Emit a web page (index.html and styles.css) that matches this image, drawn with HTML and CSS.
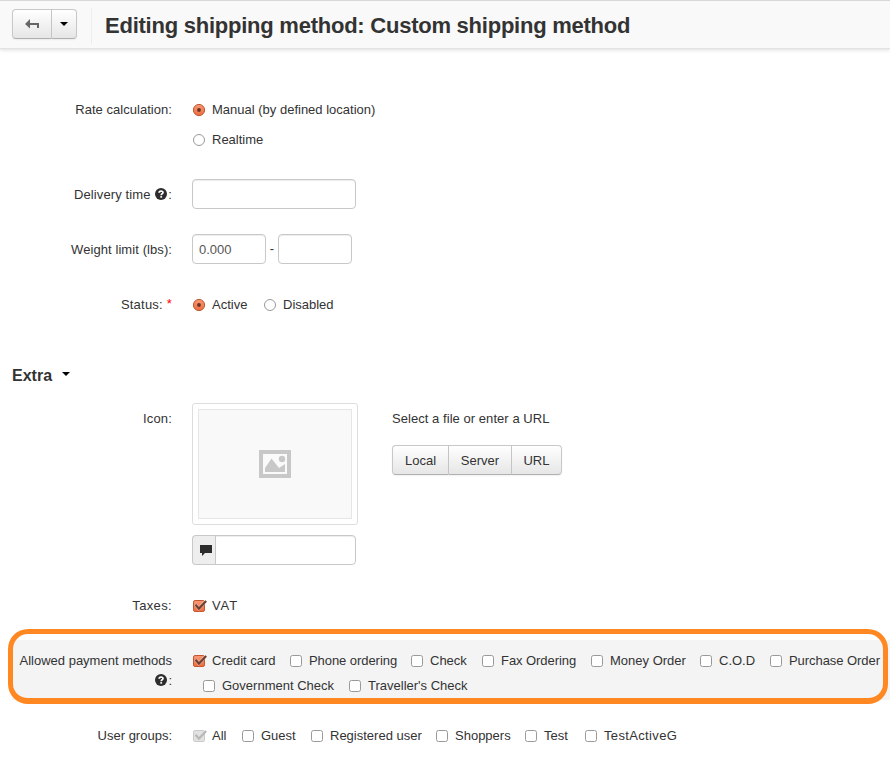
FILE: index.html
```html
<!DOCTYPE html>
<html lang="en">
<head>
<meta charset="utf-8">
<title>Editing shipping method: Custom shipping method</title>
<link rel="stylesheet" href="styles.css">
</head>
<body>
<svg class="defs" width="0" height="0" aria-hidden="true">
  <defs>
    <linearGradient id="warm" x1="0" y1="0" x2="0" y2="1"><stop offset="0" stop-color="#f79a78"/><stop offset="1" stop-color="#ec6c3f"/></linearGradient>
    <symbol id="radio-on" viewBox="0 0 14 13"><circle cx="6" cy="7" r="5.600" fill="url(#warm)" stroke="#c4552d"/><circle cx="6" cy="7" r="1.900" fill="#6b3322"/></symbol>
    <symbol id="radio-off" viewBox="0 0 14 13"><circle cx="6" cy="7" r="5.500" fill="#fff" stroke="#999997"/></symbol>
    <symbol id="check-on" viewBox="0 0 14 13"><rect x=".5" y="1.500" width="11" height="11" rx="1.600" fill="url(#warm)" stroke="#c4552d"/><path d="M2.500 5.500l3.300 4L13 2" fill="none" stroke="#fff" stroke-opacity=".3" stroke-width="3.600"/><path d="M2.600 5.700l3.300 3.900L13.200 2" fill="none" stroke="#6d4034" stroke-width="2.100"/></symbol>
    <symbol id="check-dim" viewBox="0 0 14 13"><rect x=".5" y="1.500" width="11" height="11" rx="1.600" fill="#e2e2e0" stroke="#cacac8"/><path d="M2.600 5.700l3.300 3.900L13.200 2" fill="none" stroke="#b8b8b6" stroke-width="2.100"/></symbol>
    <symbol id="check-off" viewBox="0 0 14 13"><rect x=".5" y="1.500" width="11" height="11" rx="2" fill="#fff" stroke="#999997"/></symbol>
    <symbol id="help" viewBox="0 0 12 12"><circle cx="6" cy="6" r="6" fill="#2d2d2d"/><path d="M4.100 4.700C4.100 2.500 8 2.500 8 4.600 8 5.900 6.200 5.700 6.200 7.200" fill="none" stroke="#fff" stroke-width="1.700"/><path d="M5.300 8.100h1.800v1.600H5.300z" fill="#fff"/></symbol>
  </defs>
</svg>
<header class="toolbar">
  <div class="buttons">
    <button class="btn back" aria-label="Back"><svg width="14" height="10" viewBox="0 0 14 10"><path d="M5 0v4h9v5h-2V6H5v3.500L0 5z" fill="#666"/></svg></button>
    <button class="btn more" aria-label="More"><i class="caret"></i></button>
  </div>
  <h1>Editing shipping method: Custom shipping method</h1>
</header>
<main>
  <div class="row rate">
    <div class="label">Rate calculation:</div>
    <div class="stack">
      <label class="opt"><svg class="mark"><use href="#radio-on"/></svg>Manual (by defined location)</label>
      <label class="opt"><svg class="mark"><use href="#radio-off"/></svg>Realtime</label>
    </div>
  </div>
  <div class="row field">
    <div class="label delivery">Delivery time <svg class="help"><use href="#help"/></svg>:</div>
    <input class="input wide" type="text" aria-label="Delivery time">
  </div>
  <div class="row field">
    <div class="label weight">Weight limit (lbs):</div>
    <input class="input narrow" type="text" value="0.000" aria-label="From"><span class="dash">-</span><input class="input narrow" type="text" aria-label="To">
  </div>
  <div class="row status">
    <div class="label">Status: <span class="required">*</span></div>
    <div class="options two">
      <label class="opt"><svg class="mark"><use href="#radio-on"/></svg>Active</label>
      <label class="opt"><svg class="mark"><use href="#radio-off"/></svg>Disabled</label>
    </div>
  </div>
  <h2>Extra <i class="caret"></i></h2>
  <div class="row icon-row">
    <div class="label">Icon:</div>
    <div class="upload">
      <div class="thumb"><div class="thumb-in"><svg width="32" height="28" viewBox="0 0 32 28"><path fill="#c8c8c8" d="M0 0h32v28H0z"/><path fill="#fafafa" d="M4 4h24v20H4z"/><path fill="#c8c8c8" d="M6 22v-4l6.500-9.500 7.500 9.500 6-4v8z"/><circle cx="23" cy="9" r="3.200" fill="#c8c8c8"/></svg></div></div>
      <div class="alt"><span class="addon"><svg width="12" height="11" viewBox="0 0 12 11"><path d="M0 0h12v8H5L2 11V8H0z" fill="#2d2d2d"/></svg></span><input class="input" type="text" aria-label="Alternative text"></div>
    </div>
    <div class="source">
      <div class="hint">Select a file or enter a URL</div>
      <div class="buttons"><button class="btn local">Local</button><button class="btn server">Server</button><button class="btn url">URL</button></div>
    </div>
  </div>
  <div class="row taxes">
    <div class="label">Taxes:</div>
    <label class="opt vat"><svg class="mark"><use href="#check-on"/></svg>VAT</label>
  </div>
  <div class="row payments">
    <div class="label">Allowed payment methods <svg class="help"><use href="#help"/></svg>:</div>
    <div>
      <div class="options first">
        <label class="opt"><svg class="mark"><use href="#check-on"/></svg>Credit card</label>
        <label class="opt tight"><svg class="mark"><use href="#check-off"/></svg>Phone ordering</label>
        <label class="opt"><svg class="mark"><use href="#check-off"/></svg>Check</label>
        <label class="opt tight"><svg class="mark"><use href="#check-off"/></svg>Fax Ordering</label>
        <label class="opt"><svg class="mark"><use href="#check-off"/></svg>Money Order</label>
        <label class="opt"><svg class="mark"><use href="#check-off"/></svg>C.O.D</label>
        <label class="opt tight"><svg class="mark"><use href="#check-off"/></svg>Purchase Order</label>
      </div>
      <div class="options second">
        <label class="opt"><svg class="mark"><use href="#check-off"/></svg>Government Check</label>
        <label class="opt"><svg class="mark"><use href="#check-off"/></svg>Traveller's Check</label>
      </div>
    </div>
    <div class="highlight"></div>
  </div>
  <div class="row groups">
    <div class="label">User groups:</div>
    <div class="options group-list">
      <label class="opt"><svg class="mark"><use href="#check-dim"/></svg>All</label>
      <label class="opt"><svg class="mark"><use href="#check-off"/></svg>Guest</label>
      <label class="opt"><svg class="mark"><use href="#check-off"/></svg>Registered user</label>
      <label class="opt"><svg class="mark"><use href="#check-off"/></svg>Shoppers</label>
      <label class="opt"><svg class="mark"><use href="#check-off"/></svg>Test</label>
      <label class="opt last"><svg class="mark"><use href="#check-off"/></svg>TestActiveG</label>
    </div>
  </div>
</main>
</body>
</html>
```
FILE: styles.css
```css
* { box-sizing: border-box; }
body {
  margin: 0;
  height: 760px;
  overflow: hidden;
  background: #fff;
  color: #333;
  font: 13px/20px "Liberation Sans", Arial, sans-serif;
}
.defs { position: absolute; }
button, input { font: inherit; color: inherit; margin: 0; }
svg { display: block; flex: none; }

.toolbar {
  display: flex;
  align-items: flex-start;
  height: 49px;
  padding: 8px 12px 0;
  background: #f9f9f9;
  border-top: 1px solid #d8d8d8;
  border-bottom: 1px solid #e2e2e2;
  box-shadow: 0 1px 4px rgba(0, 0, 0, .14);
}
.toolbar h1 {
  height: 36px;
  margin: -1px 0 0 14px;
  padding-left: 13px;
  border-left: 1px solid #ededed;
  font-size: 22px;
  line-height: 36px;
  letter-spacing: -.24px;
  white-space: nowrap;
}
.buttons { display: flex; }
.btn {
  display: flex;
  align-items: center;
  justify-content: center;
  height: 30px;
  padding: 1px 0 0;
  border: 1px solid #c8c8c8;
  border-bottom-color: #b0b0b0;
  border-left-width: 0;
  background: linear-gradient(#fff, #e6e6e6);
  box-shadow: 0 1px 2px rgba(0, 0, 0, .06);
}
.btn:first-child { border-left-width: 1px; border-radius: 4px 0 0 4px; }
.btn:last-child { border-radius: 0 4px 4px 0; }
.toolbar .btn { padding: 0; }
.back { width: 40px; }
.more { width: 25px; }
.caret {
  display: inline-block;
  border: 4px solid transparent;
  border-top-color: #000;
  border-bottom: 0;
}

.row { display: flex; position: relative; }
.label { width: 172px; margin-right: 20px; flex: none; text-align: right; }
.opt { display: flex; align-items: center; height: 20px; padding-left: 1px; white-space: nowrap; }
.mark { width: 14px; height: 13px; margin: -1px 5px 0 0; }
.help { display: inline-block; width: 12px; height: 12px; margin: 0 1px; vertical-align: -1px; }
.rate { margin-top: 51px; }
.rate .label { letter-spacing: .04px; }
.stack { display: grid; gap: 10px; }
.field { margin-top: 29px; height: 30px; align-items: center; }
.field .label { padding-top: 2px; }
.field + .field { margin-top: 25px; }
.delivery { letter-spacing: .11px; }
.weight { letter-spacing: .08px; }
.input {
  height: 30px;
  padding: 0 6px;
  border: 1px solid #c8c8c8;
  border-radius: 4px;
  background: #fff;
  box-shadow: inset 0 1px 1px rgba(0, 0, 0, .075);
  color: #555;
  outline: 0;
}
.wide { width: 164px; }
.narrow { width: 74px; }
.dash { width: 12px; text-align: center; }
.status { margin-top: 31px; }
.status .label { letter-spacing: .22px; }
.required { color: #f00; position: relative; top: -1px; }
.options { display: grid; }
.two { grid-template-columns: 71px auto; }
h2 { display: flex; align-items: center; gap: 10px; margin: 50px 0 0 12px; font-size: 16px; line-height: 22px; }
h2 .caret { margin-top: -4px; }

.icon-row { margin-top: 16px; }
.icon-row .label { padding-top: 6px; letter-spacing: .15px; }
.upload { width: 200px; }
.thumb { width: 166px; height: 122px; padding: 5px; border: 1px solid #ddd; border-radius: 3px; }
.thumb-in { display: grid; place-items: center; height: 110px; border: 1px solid #e6e6e6; background: #f9f9f9; }
.alt { display: flex; width: 164px; margin-top: 10px; }
.addon { display: grid; place-items: center; width: 24px; height: 30px; padding-left: 3px; padding-right: 1px; border: 1px solid #c8c8c8; border-right: 0; border-radius: 4px 0 0 4px; background: #eee; }
.alt .input { width: 141px; margin-left: -1px; border-radius: 0 4px 4px 0; }
.source { padding-top: 6px; }
.hint { letter-spacing: .05px; }
.source .buttons { margin-top: 16px; }
.local { width: 57px; }
.server { width: 63px; }
.url { width: 50px; }
.taxes { margin-top: 31px; }
.taxes .label { letter-spacing: .35px; }
.vat { letter-spacing: .9px; }
.payments { height: 60px; margin-top: 24px; margin-left: 12px; padding-top: 11px; background: #f4f4f4; }
.payments .label { width: 160px; line-height: 20px; }
.tight { letter-spacing: -.06px; }
.first { grid-template-columns: 97px 121px 71px 109px 109px 70px auto; }
.second { grid-template-columns: 146px auto; margin: 5px 0 0 10px; }
.highlight {
  position: absolute;
  top: -11px;
  left: -4px;
  width: 880px;
  height: 75px;
  border: 5px solid #ff8822;
  border-bottom-width: 6px;
  border-radius: 20px;
}
.groups { margin-top: 26px; }
.group-list { grid-template-columns: 49px 69px 125px 89px 60px auto; }
.last { letter-spacing: .35px; }
```
